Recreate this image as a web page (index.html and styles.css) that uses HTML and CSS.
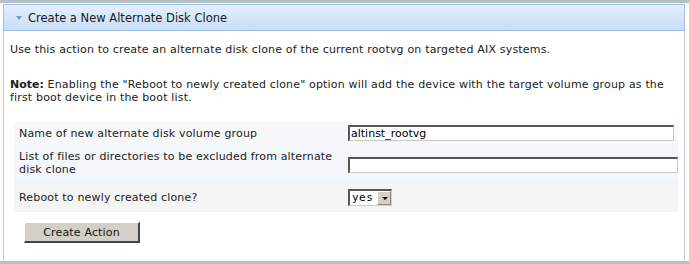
FILE: index.html
```html
<!DOCTYPE html>
<html>
<head>
<meta charset="utf-8">
<link rel="stylesheet" href="styles.css">
</head>
<body>
<div class="frame">
  <div class="panel">
    <div class="header">
      <span class="twisty"></span>
      <span class="title">Create a New Alternate Disk Clone</span>
    </div>
    <div class="body">
      <p class="intro">Use this action to create an alternate disk clone of the current rootvg on targeted AIX systems.</p>
      <p class="note"><b>Note:</b> Enabling the "Reboot to newly created clone" option will add the device with the target volume group as the first boot device in the boot list.</p>
      <div class="form">
        <div class="row row1">
          <div class="label">Name of new alternate disk volume group</div>
          <div class="field"><div class="input in1">altinst_rootvg</div></div>
        </div>
        <div class="row row2">
          <div class="label">List of files or directories to be excluded from alternate disk clone</div>
          <div class="field"><div class="input in2"></div></div>
        </div>
        <div class="row row3">
          <div class="label">Reboot to newly created clone?</div>
          <div class="field"><div class="select"><span class="val">yes</span><span class="arrow"></span></div></div>
        </div>
      </div>
      <div class="actions"><div class="button">Create Action</div></div>
    </div>
  </div>
</div>
</body>
</html>
```

FILE: styles.css
```css
html, body { margin: 0; padding: 0; background: #fff; }
body { font-family: "DejaVu Sans", Verdana, sans-serif; font-size: 11px; color: #222; letter-spacing: 0.17px; }
.frame {
  width: 689px; height: 264px; box-sizing: border-box;
  border-top: 3px solid #b7bfc7; border-bottom: 3px solid #b7bfc7;
}
.panel {
  margin: 0 4px 0 3px; height: 258px; box-sizing: border-box;
  border-left: 1px solid #c3cad1; border-right: 1px solid #c3cad1;
}
.header {
  height: 27px; box-sizing: border-box; margin: 1px -1px 0 -1px;
  background: linear-gradient(#e4effc, #c8def7);
  border: 1px solid #9fbde0;
  display: flex; align-items: center; padding-left: 12px;
}
.twisty {
  width: 0; height: 0; border-left: 3px solid transparent; border-right: 3px solid transparent;
  border-top: 4px solid #6d9bd6; margin-right: 6px; margin-top: 1px;
}
.title { font-size: 11.5px; letter-spacing: 0; color: #1a1a1a; }
.body { padding: 12px 0 0 6px; }
p { margin: 0; line-height: 13px; }
.intro { margin-bottom: 22px; }
.note { padding-right: 10px; }
.note b { letter-spacing: 0; }
.form { margin: 18px 6px 0 4px; }
.row { display: flex; }
.row1 { background: #f6f8fa; height: 22px; align-items: center; padding-top: 1px; box-sizing: border-box; }
.row2 { background: #f3f7fc; height: 37px; padding-top: 6px; box-sizing: border-box; }
.row3 { background: #f4f4f4; height: 31px; align-items: center; padding-top: 1px; box-sizing: border-box; }
.label { width: 329px; padding-left: 5px; line-height: 13px; flex: none; }
.field { flex: 1; }
.input {
  height: 16px; box-sizing: border-box; background: #fff;
  border: 1px solid #c8c8c8; border-top: 2px solid #555; border-left: 2px solid #555;
  font-size: 11px; letter-spacing: 0; line-height: 13px; padding-left: 1px; color: #000;
}
.in1 { width: 326px; margin-top: -1px; }
.in2 { width: 330px; margin-top: 7px; }
.select {
  width: 44px; height: 17px; box-sizing: border-box; display: flex;
  border: 1px solid #ccc; border-top: 2px solid #555; border-left: 2px solid #555; background: #fff;
}
.val { font-family: "DejaVu Sans Mono", monospace; font-size: 11px; letter-spacing: 0.5px; line-height: 13px; padding-left: 2px; width: 27px; color: #000; }
.arrow {
  width: 13px; background: #d4d0c8; border: 1px solid #fff; border-right-color: #888; border-bottom-color: #888;
  position: relative;
}
.arrow::after {
  content: ""; position: absolute; left: 4px; top: 5px; width: 0; height: 0;
  border-left: 3px solid transparent; border-right: 3px solid transparent; border-top: 3px solid #000;
}
.actions { padding: 10px 0 0 14px; }
.button {
  width: 116px; height: 21px; box-sizing: border-box; text-align: center;
  background: #d4d0c8; border: 1px solid #fff; border-right: 2px solid #444; border-bottom: 2px solid #444;
  line-height: 19px; font-size: 11px; color: #111;
}
```
